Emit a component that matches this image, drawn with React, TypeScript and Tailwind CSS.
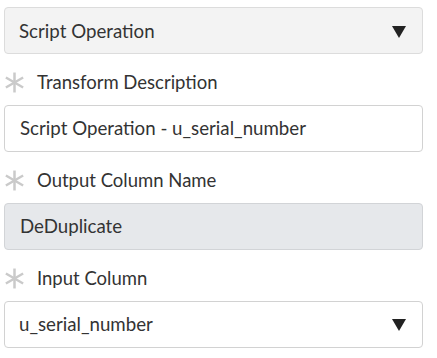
import React from "react";

function Asterisk() {
  return (
    <svg width="21" height="21" viewBox="0 0 20 20" className="shrink-0">
      <g stroke="#cacaca" strokeWidth="2.4">
        <line x1="10" y1="0.5" x2="10" y2="19.5" />
        <line x1="1.8" y1="5.25" x2="18.2" y2="14.75" />
        <line x1="1.8" y1="14.75" x2="18.2" y2="5.25" />
      </g>
    </svg>
  );
}

function Caret() {
  return (
    <svg width="14" height="12" viewBox="0 0 14 12">
      <polygon points="0,0 14,0 7,12" fill="#222" />
    </svg>
  );
}

function Label({ text }: { text: string }) {
  return (
    <div className="flex items-center gap-[12px] h-[51px] pt-[6px]">
      <Asterisk />
      <span className="text-[18.5px] text-[#333]">{text}</span>
    </div>
  );
}

export default function App() {
  return (
    <div
      className="w-[437px] h-[358px] bg-white pt-[7px] pl-[4px] pr-[14px]"
      style={{ fontFamily: "Lato, 'Liberation Sans', sans-serif" }}
    >
      <div className="h-[47px] flex items-center justify-between rounded-[4px] border border-[#dcdcdc] bg-[#f3f3f3] pl-[14px] pr-[16px] pt-[2px]">
        <span className="text-[18.7px] text-[#333]">Script Operation</span>
        <Caret />
      </div>
      <Label text="Transform Description" />
      <div className="h-[47px] flex items-center rounded-[4px] border border-[#d2d2d2] bg-white pl-[15px]">
        <span className="text-[18.7px] text-[#333]">Script Operation - u_serial_number</span>
      </div>
      <Label text="Output Column Name" />
      <div className="h-[47px] flex items-center rounded-[4px] border border-[#d2d4d7] bg-[#e6e8eb] pl-[15px]">
        <span className="text-[18.7px] text-[#333]">DeDuplicate</span>
      </div>
      <Label text="Input Column" />
      <div className="h-[47px] flex items-center justify-between rounded-[4px] border border-[#d2d2d2] bg-white pl-[14px] pr-[16px]">
        <span className="text-[18.7px] text-[#333]">u_serial_number</span>
        <Caret />
      </div>
    </div>
  );
}
